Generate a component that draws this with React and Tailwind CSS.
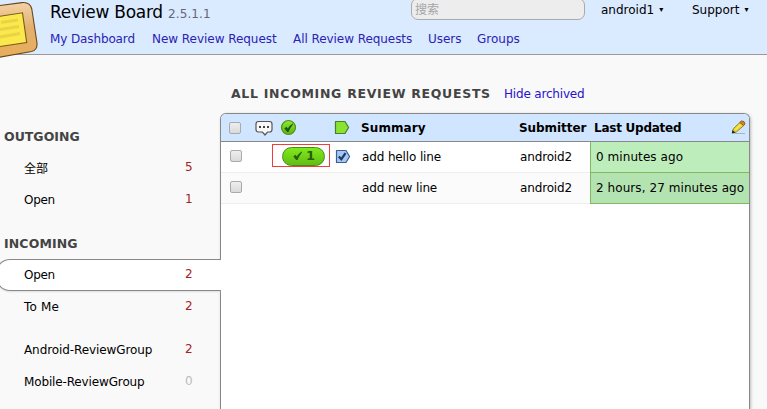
import React from "react";

const navLinks = [
  { label: "My Dashboard", cls: "w-[102px] tracking-[-0.12px]" },
  { label: "New Review Request", cls: "w-[141px] tracking-[-0.04px]" },
  { label: "All Review Requests", cls: "w-[135px] tracking-[-0.06px]" },
  { label: "Users", cls: "w-[49px] tracking-[-0.05px]" },
  { label: "Groups", cls: "w-[60px] tracking-[0px]" },
];

function Logo() {
  return (
    <svg width="50" height="64" viewBox="0 0 50 64" className="block overflow-visible">
      <defs>
        <linearGradient id="frame" x1="0" y1="0" x2="0" y2="1">
          <stop offset="0" stopColor="#f3d2a8" />
          <stop offset="0.45" stopColor="#e3b06d" />
          <stop offset="1" stopColor="#e8ad58" />
        </linearGradient>
      </defs>
      <path d="M-8 6.500 L22 2.600 Q30 1.800 31.800 9 L37 43 Q37.600 50 31.500 51.500 L-8 58.500 Z" fill="url(#frame)" stroke="#67471c" strokeWidth="1.1" />
      <path d="M-8 17.500 L22.500 12.800 L26.700 42.500 L-8 47.700 Z" fill="#fbe84c" stroke="#7b5b1b" strokeWidth="1.1" />
      <path d="M1 22.500 L18 20 M0 29.500 L19 26.500 M0 37 L20 33.500" stroke="#e9d444" strokeWidth="3" fill="none" />
    </svg>
  );
}

function Checkbox() {
  return <span className="block h-[12px] w-[12px] rounded-[2px] border border-[#aaa] bg-linear-to-b from-[#eee] to-[#dadada]" />;
}

function CommentIcon() {
  return (
    <svg width="19" height="17" viewBox="0 0 19 17" className="block">
      <path d="M3.500 1.500 H14.500 Q17 1.500 17 4 V9.500 Q17 12 14.500 12 H12.500 L10 15 L7.500 12 H3.500 Q1 12 1 9.500 V4 Q1 1.500 3.500 1.500 Z" fill="#f8f8f8" stroke="#555" strokeWidth="1.2" />
      <path d="M4 6h2v2H4z M8 6h2v2H8z M12 6h2v2h-2z" fill="#444" />
    </svg>
  );
}

function CheckMark({ color }) {
  return <path d="M0.800 5.400 L2.900 3.800 L4.300 5.600 Q6 2.500 9.200 0.500 L9.700 1.100 Q6.900 4.600 5 9 L3.700 9 Z" fill={color} />;
}

function ShipItIcon() {
  return (
    <svg width="17" height="17" viewBox="0 0 17 17" className="block">
      <defs>
        <linearGradient id="ship" x1="0" y1="0" x2="0" y2="1">
          <stop offset="0" stopColor="#8bea31" />
          <stop offset="1" stopColor="#57b613" />
        </linearGradient>
      </defs>
      <circle cx="8.500" cy="8.500" r="7" fill="url(#ship)" stroke="#4a9417" strokeWidth="1.2" />
      <g transform="translate(3.500 4)"><CheckMark color="#255407" /></g>
    </svg>
  );
}

function TagIcon({ fill, stroke, checked }) {
  return (
    <svg width="16" height="15" viewBox="0 0 16 15" className="block">
      <path d="M1.500 1.500 H11 L14.600 7.500 L11 13.500 H1.500 Z" fill={fill} stroke={stroke} strokeWidth="1.2" strokeLinejoin="round" />
      {checked && <path d="M3.800 7.600 L6.300 10.200 L10.500 4.200" fill="none" stroke="#173a70" strokeWidth="2.2" />}
    </svg>
  );
}

function PencilIcon() {
  return (
    <svg width="16" height="15" viewBox="0 0 16 15" className="block">
      <path d="M4 13.500 H14" stroke="#a9b4c2" strokeWidth="1" />
      <path d="M1.500 12.500 L2.300 8.800 L9 2.300 L12.700 5.600 L5.300 12 Z" fill="#e8d836" stroke="#8a7a16" strokeWidth="0.900" />
      <path d="M4.500 9.500 L10 4.500" stroke="#f4ea60" strokeWidth="1.200" />
      <path d="M8.800 2.400 L10.500 0.900 Q13.800 0.800 14 4 L12.600 5.600 Z" fill="#d98526" stroke="#94520f" strokeWidth="0.900" />
      <path d="M0.800 13.600 L1.500 10 L4.500 12.900 Z" fill="#28251c" />
    </svg>
  );
}

function NavItem({ label, count, cls, active, muted }) {
  return (
    <li className={"flex shrink-0 items-center " + (active ? "-ml-[4px] mr-[-1px] h-[32px] rounded-l-[14px] border border-r-0 border-[#888] bg-white pl-[27px] shadow-[0_2px_2px_-1px_#ddd] " : "h-[32px] pl-[24px] ")}>
      <span className={"w-[161px] whitespace-nowrap " + cls}>{label}</span>
      <span className={"relative -top-px " + (muted ? "text-[#bbb]" : "text-[#a52222]")}>{count}</span>
    </li>
  );
}

function Row({ summary, age, ageCls, rowCls, shipIt }) {
  return (
    <div className={"flex h-[31px] items-stretch border-b border-[#eee] " + rowCls}>
      <div className="w-[51px] pt-[8px] pl-[9px]"><Checkbox /></div>
      <div className="w-[60px]">
        {shipIt && (
          <div className="mt-[2px] flex h-[23px] w-[58px] items-center border border-[#f23b3b] pt-px pl-[9px]">
            <span className="flex h-[19px] w-[43px] items-center rounded-full border border-[#458f10] bg-linear-to-b from-[#7eea1b] to-[#62bd13] pl-[9px] text-[13px] font-bold text-[#2b5c0b]">
              <svg width="11" height="10" viewBox="0 0 10 10" className="mr-[3px]"><CheckMark color="#2b5c0b" /></svg>1
            </span>
          </div>
        )}
      </div>
      <div className="w-[30px] pt-[7px] pl-[3px]">{shipIt && <TagIcon fill="#a9c5ee" stroke="#365f9c" checked />}</div>
      <div className="w-[158px] text-[12px] leading-[30px] tracking-[-0.13px]">{summary}</div>
      <div className="w-[70px] text-[12px] leading-[30px] tracking-[-0.15px]">android2</div>
      <div className={"-mb-px flex-1 border-b border-l border-[#82b95c] pl-[5px] text-[12px] leading-[30px] tracking-[0.07px] whitespace-nowrap " + ageCls}>{age}</div>
    </div>
  );
}

export default function App() {
  return (
    <div className="flex h-[409px] w-[767px] flex-col overflow-hidden bg-[#f9f9f9] font-['DejaVu_Sans','Noto_Sans_CJK_SC',sans-serif] text-[12px] leading-[16px] text-black">
      <header className="flex h-[55px] shrink-0 border-b border-[#999] bg-[#daeaff]">
        <div className="z-10 w-[50px] shrink-0"><Logo /></div>
        <div className="w-[717px]">
          <div className="flex h-[31px]">
            <h1 className="w-[118px] text-[17px] leading-[25px] tracking-[-0.26px] whitespace-nowrap">Review Board</h1>
            <span className="w-[243px] pt-[6px] tracking-[0.1px] text-[#667]">2.5.1.1</span>
            <div className="-mt-[2px] h-[22px] w-[174px] rounded-[7px] border border-[#aaa] bg-[#ededed] pl-[3px] leading-[22px] text-[#a5a5a5]">搜索</div>
            <div className="flex w-[107px] pt-[2px] pl-[16px]">android1<span className="ml-[5px] text-[8px]">▾</span></div>
            <div className="flex pt-[2px]">Support<span className="ml-[5px] text-[8px]">▾</span></div>
          </div>
          <nav className="flex text-[#2a22b5]">
            {navLinks.map((n) => <a key={n.label} className={"whitespace-nowrap " + n.cls}>{n.label}</a>)}
          </nav>
        </div>
      </header>

      <div className="flex min-h-0 flex-1">
        <aside className="z-10 w-[220px] shrink-0 pt-[74px]">
          <h2 className="h-[23px] pl-[4px] text-[12.5px] font-bold tracking-[0.02px] text-[#444]">OUTGOING</h2>
          <ul>
            <NavItem label="全部" count="5" cls="pt-px" />
            <NavItem label="Open" count="1" cls="tracking-[-0.3px]" />
          </ul>
          <h2 className="mt-[20px] h-[23px] pl-[4px] text-[12.5px] font-bold tracking-[0.12px] text-[#444]">INCOMING</h2>
          <ul>
            <NavItem label="Open" count="2" cls="tracking-[-0.3px]" active />
            <NavItem label="To Me" count="2" cls="tracking-[0.2px]" />
          </ul>
          <ul className="mt-[11px]">
            <NavItem label="Android-ReviewGroup" count="2" cls="tracking-[-0.09px]" />
            <NavItem label="Mobile-ReviewGroup" count="0" cls="tracking-[-0.14px]" muted />
          </ul>
        </aside>

        <main className="flex w-[530px] shrink-0 flex-col">
          <div className="flex h-[58px] shrink-0 pt-[31px] pl-[11px] whitespace-nowrap">
            <h2 className="w-[273px] text-[12.5px] font-bold tracking-[0.7px] text-[#444]">ALL INCOMING REVIEW REQUESTS</h2>
            <a className="tracking-[-0.18px] text-[#2811cc]">Hide archived</a>
          </div>
          <section className="flex-1 overflow-hidden rounded-t-[6px] border border-b-0 border-[#888] bg-white shadow-[1px_1px_3px_#bbb]">
            <div className="flex h-[28px] items-center border-b border-[#888] bg-[#d0e5ff] font-bold">
              <div className="w-[33px] pl-[8px]"><Checkbox /></div>
              <div className="w-[26px] pt-px pl-px"><CommentIcon /></div>
              <div className="w-[54px]"><ShipItIcon /></div>
              <div className="w-[27px]"><TagIcon fill="#8be330" stroke="#40812a" /></div>
              <div className="w-[158px] tracking-[0.1px]">Summary</div>
              <div className="w-[75px] tracking-[-0.06px]">Submitter</div>
              <div className="w-[137px] tracking-[-0.25px]">Last Updated</div>
              <PencilIcon />
            </div>
            <Row summary="add hello line" age="0 minutes ago" rowCls="bg-white" ageCls="bg-[#beedbc]" shipIt />
            <Row summary="add new line" age="2 hours, 27 minutes ago" rowCls="bg-[#fbfbfb]" ageCls="bg-[#b4e3b2]" />
          </section>
        </main>
      </div>
    </div>
  );
}
